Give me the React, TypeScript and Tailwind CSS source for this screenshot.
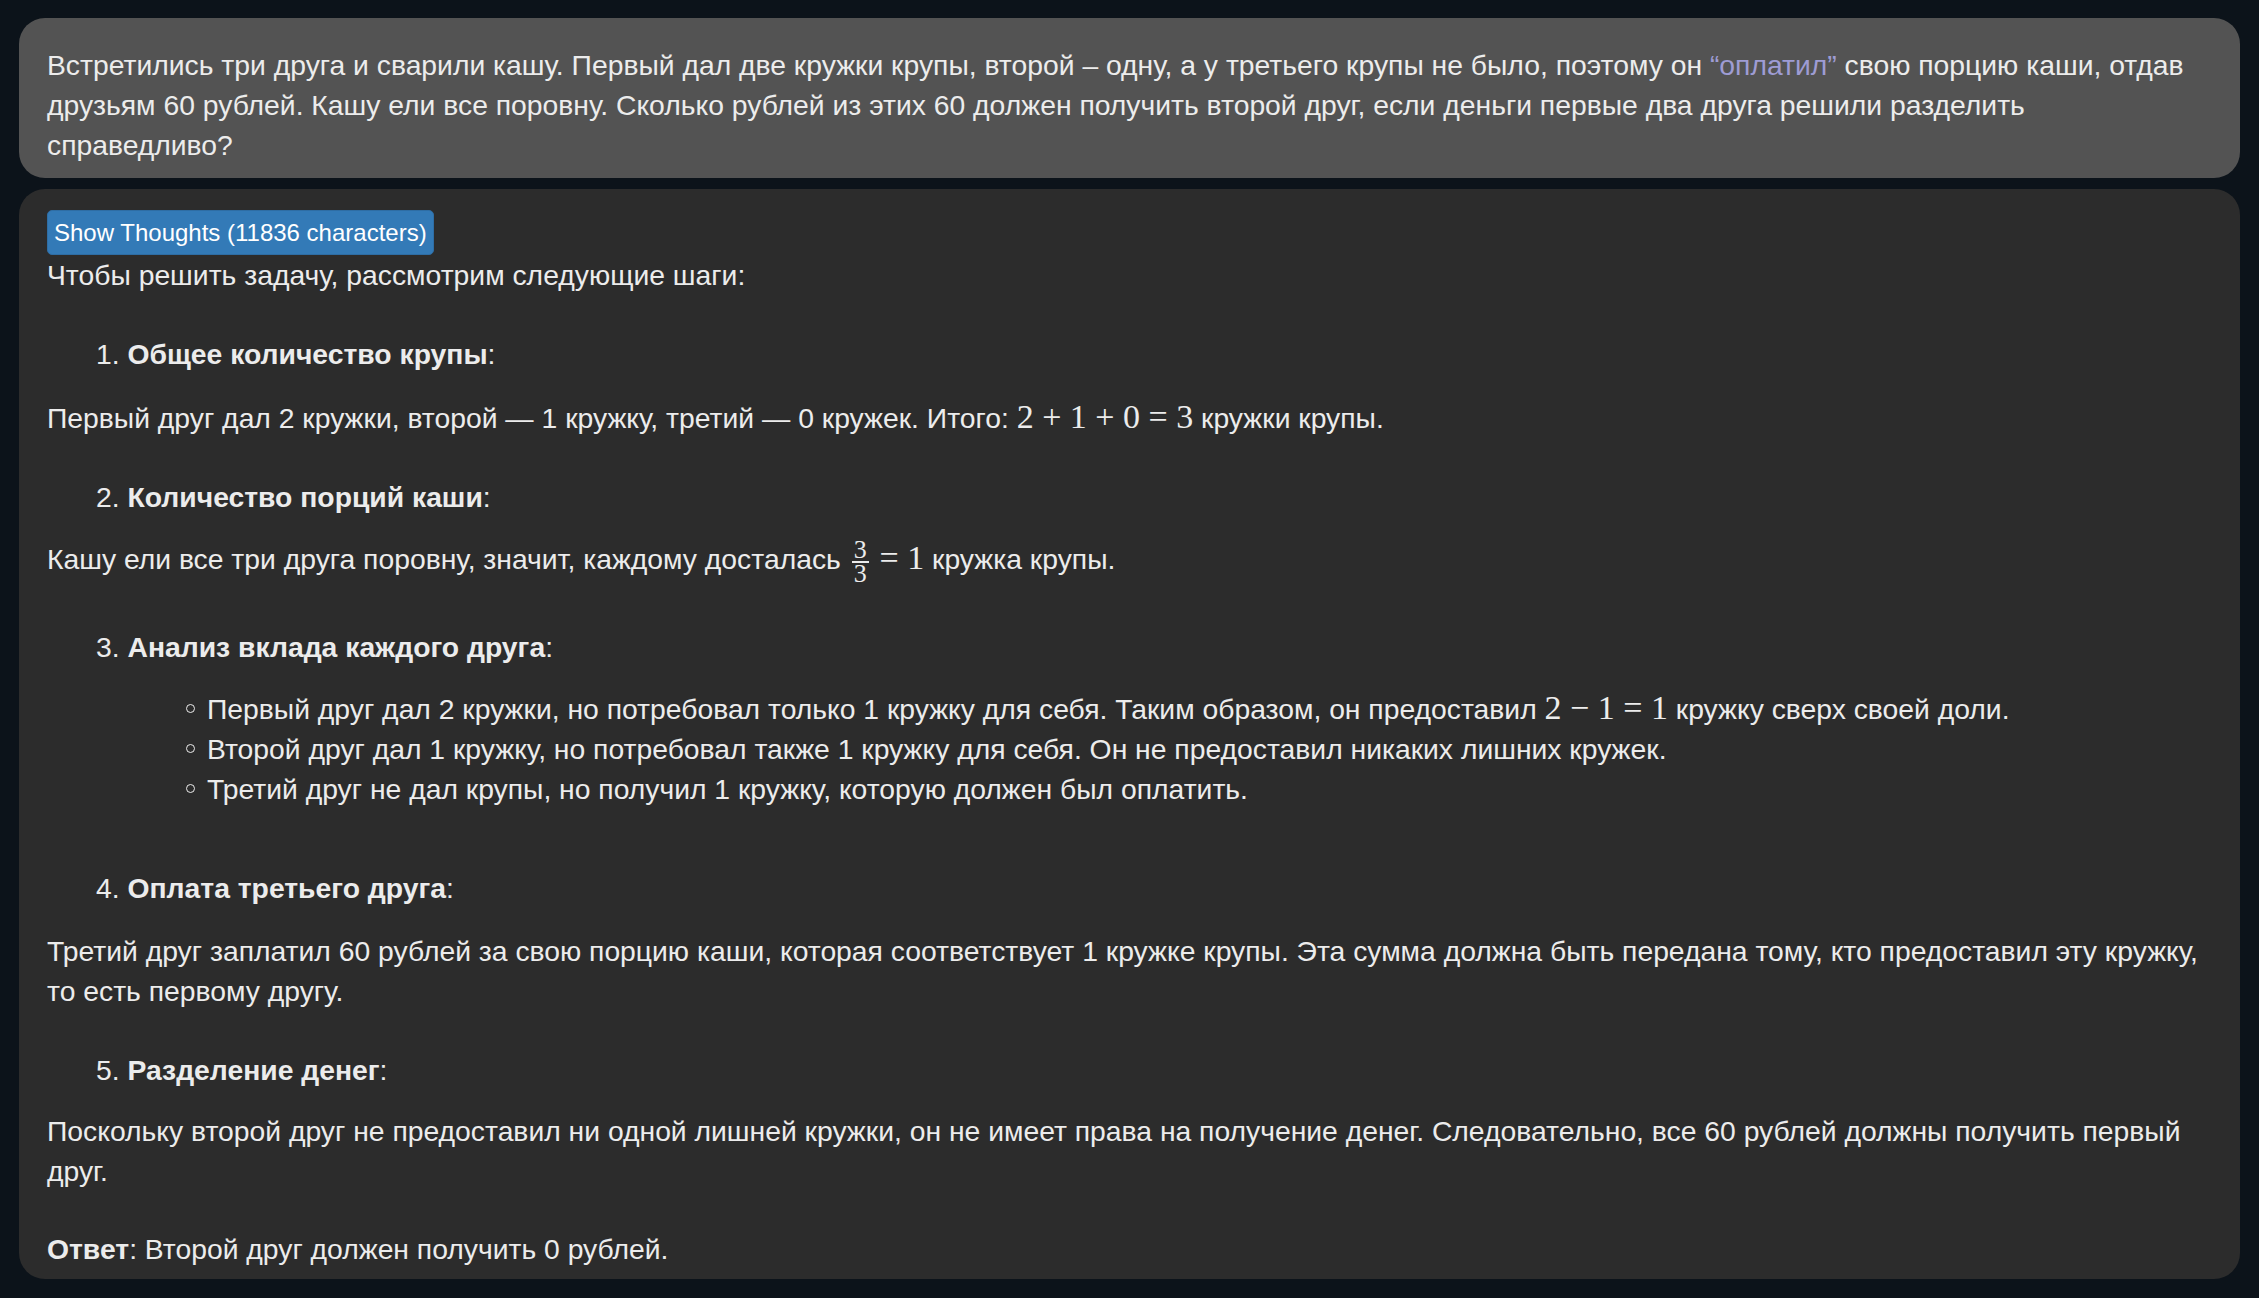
import React from "react";

const sans = { fontFamily: "'Liberation Sans', Arial, Helvetica, sans-serif" };
const serif = { fontFamily: "'Liberation Serif', 'Times New Roman', serif" };

function M({ children }: { children: React.ReactNode }) {
  return (
    <span className="text-[34px] leading-none" style={serif}>
      {children}
    </span>
  );
}

function Frac() {
  return (
    <span className="inline-flex flex-col items-center align-middle mx-[3px] text-[26px]" style={serif}>
      <span className="block leading-[22px]">3</span>
      <span className="block h-[1.5px] w-[17px] bg-[#ececec]" />
      <span className="block leading-[22px]">3</span>
    </span>
  );
}

function Heading({ n, title, className }: { n: string; title: string; className: string }) {
  return (
    <div className={"pl-[49px] " + className}>
      {n}. <b className="font-bold">{title}</b>:
    </div>
  );
}

function Bullet({ children }: { children: React.ReactNode }) {
  return (
    <li className="flex items-center">
      <span className="ml-[139px] mr-[12px] inline-block h-[9px] w-[9px] shrink-0 rounded-full border-[1.5px] border-[#ececec]" />
      <span>{children}</span>
    </li>
  );
}

export default function App() {
  return (
    <div className="min-h-[1298px] w-full bg-[#0c131a] px-[19px] pt-[18px] pb-[19px] text-[28.3px] leading-[40px] text-[#ececec]" style={sans}>
      <div className="rounded-[26px] bg-[#535353] pl-[28px] pr-[12px] pt-[27px] pb-[13px]">
        <p>
          Встретились три друга и сварили кашу. Первый дал две кружки крупы, второй – одну, а у третьего крупы не было, поэтому он{" "}
          <span className="text-[#9e9cd4]">“оплатил”</span> свою порцию каши, отдав
          <br />
          друзьям 60 рублей. Кашу ели все поровну. Сколько рублей из этих 60 должен получить второй друг, если деньги первые два друга решили разделить
          <br />
          справедливо?
        </p>
      </div>

      <div className="mt-[11px] rounded-[26px] bg-[#2c2c2c] pl-[28px] pr-[12px] pt-[21px] pb-[10px]">
        <button className="flex h-[45px] items-center rounded-[5px] border border-[#2e6da4] bg-[#337ab7] px-[6px] text-[24px] leading-none text-white">
          Show Thoughts (11836 characters)
        </button>
        <p>Чтобы решить задачу, рассмотрим следующие шаги:</p>

        <Heading n="1" title="Общее количество крупы" className="mt-[39px]" />
        <p className="mt-[24px]">
          Первый друг дал 2 кружки, второй — 1 кружку, третий — 0 кружек. Итого: <M>2 + 1 + 0 = 3</M> кружки крупы.
        </p>

        <Heading n="2" title="Количество порций каши" className="mt-[39px]" />
        <p className="mt-[22px]">
          Кашу ели все три друга поровну, значит, каждому досталась <Frac /> <M>= 1</M> кружка крупы.
        </p>

        <Heading n="3" title="Анализ вклада каждого друга" className="mt-[42px]" />
        <ul className="mt-[22px]">
          <Bullet>
            Первый друг дал 2 кружки, но потребовал только 1 кружку для себя. Таким образом, он предоставил <M>2 − 1 = 1</M> кружку сверх своей доли.
          </Bullet>
          <Bullet>Второй друг дал 1 кружку, но потребовал также 1 кружку для себя. Он не предоставил никаких лишних кружек.</Bullet>
          <Bullet>Третий друг не дал крупы, но получил 1 кружку, которую должен был оплатить.</Bullet>
        </ul>

        <Heading n="4" title="Оплата третьего друга" className="mt-[59px]" />
        <p className="mt-[23px]">
          Третий друг заплатил 60 рублей за свою порцию каши, которая соответствует 1 кружке крупы. Эта сумма должна быть передана тому, кто предоставил эту кружку,
          <br />
          то есть первому другу.
        </p>

        <Heading n="5" title="Разделение денег" className="mt-[39px]" />
        <p className="mt-[21px]">
          Поскольку второй друг не предоставил ни одной лишней кружки, он не имеет права на получение денег. Следовательно, все 60 рублей должны получить первый
          <br />
          друг.
        </p>

        <p className="mt-[38px]">
          <b className="font-bold">Ответ</b>: Второй друг должен получить 0 рублей.
        </p>
      </div>
    </div>
  );
}
